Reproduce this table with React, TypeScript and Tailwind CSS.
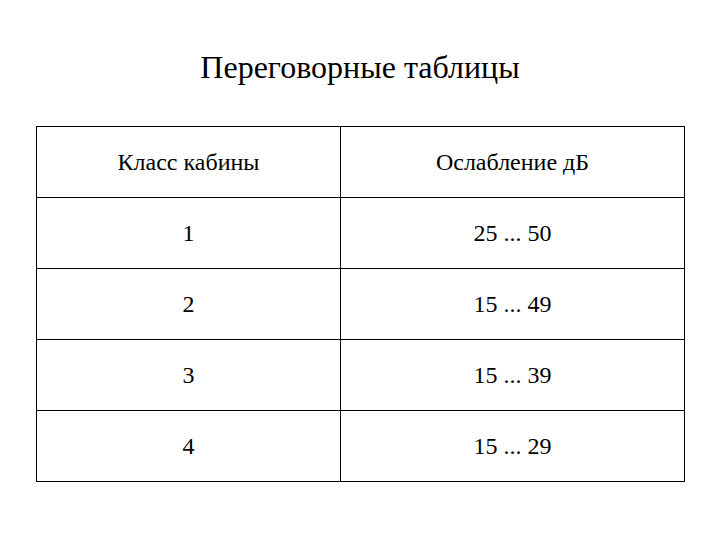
const rows = [
  { cls: "1", att: "25 ... 50" },
  { cls: "2", att: "15 ... 49" },
  { cls: "3", att: "15 ... 39" },
  { cls: "4", att: "15 ... 29" },
];

export default function App() {
  return (
    <div className="w-[720px] h-[540px] bg-white text-black [font-family:'Liberation_Serif','Times_New_Roman',serif]">
      <div className="flex flex-col items-center pt-[47px]">
        <h1 className="text-[32px] leading-[40px]">Переговорные таблицы</h1>
      </div>
      <table className="ml-[36px] mt-[39px] w-[649px] border-collapse text-[24px]">
        <tbody>
          <tr className="h-[71px]">
            <td className="w-[304px] border border-black text-center">Класс кабины</td>
            <td className="border border-black text-center">Ослабление дБ</td>
          </tr>
          {rows.map((r) => (
            <tr key={r.cls} className="h-[71px]">
              <td className="border border-black text-center">{r.cls}</td>
              <td className="border border-black text-center">{r.att}</td>
            </tr>
          ))}
        </tbody>
      </table>
    </div>
  );
}
